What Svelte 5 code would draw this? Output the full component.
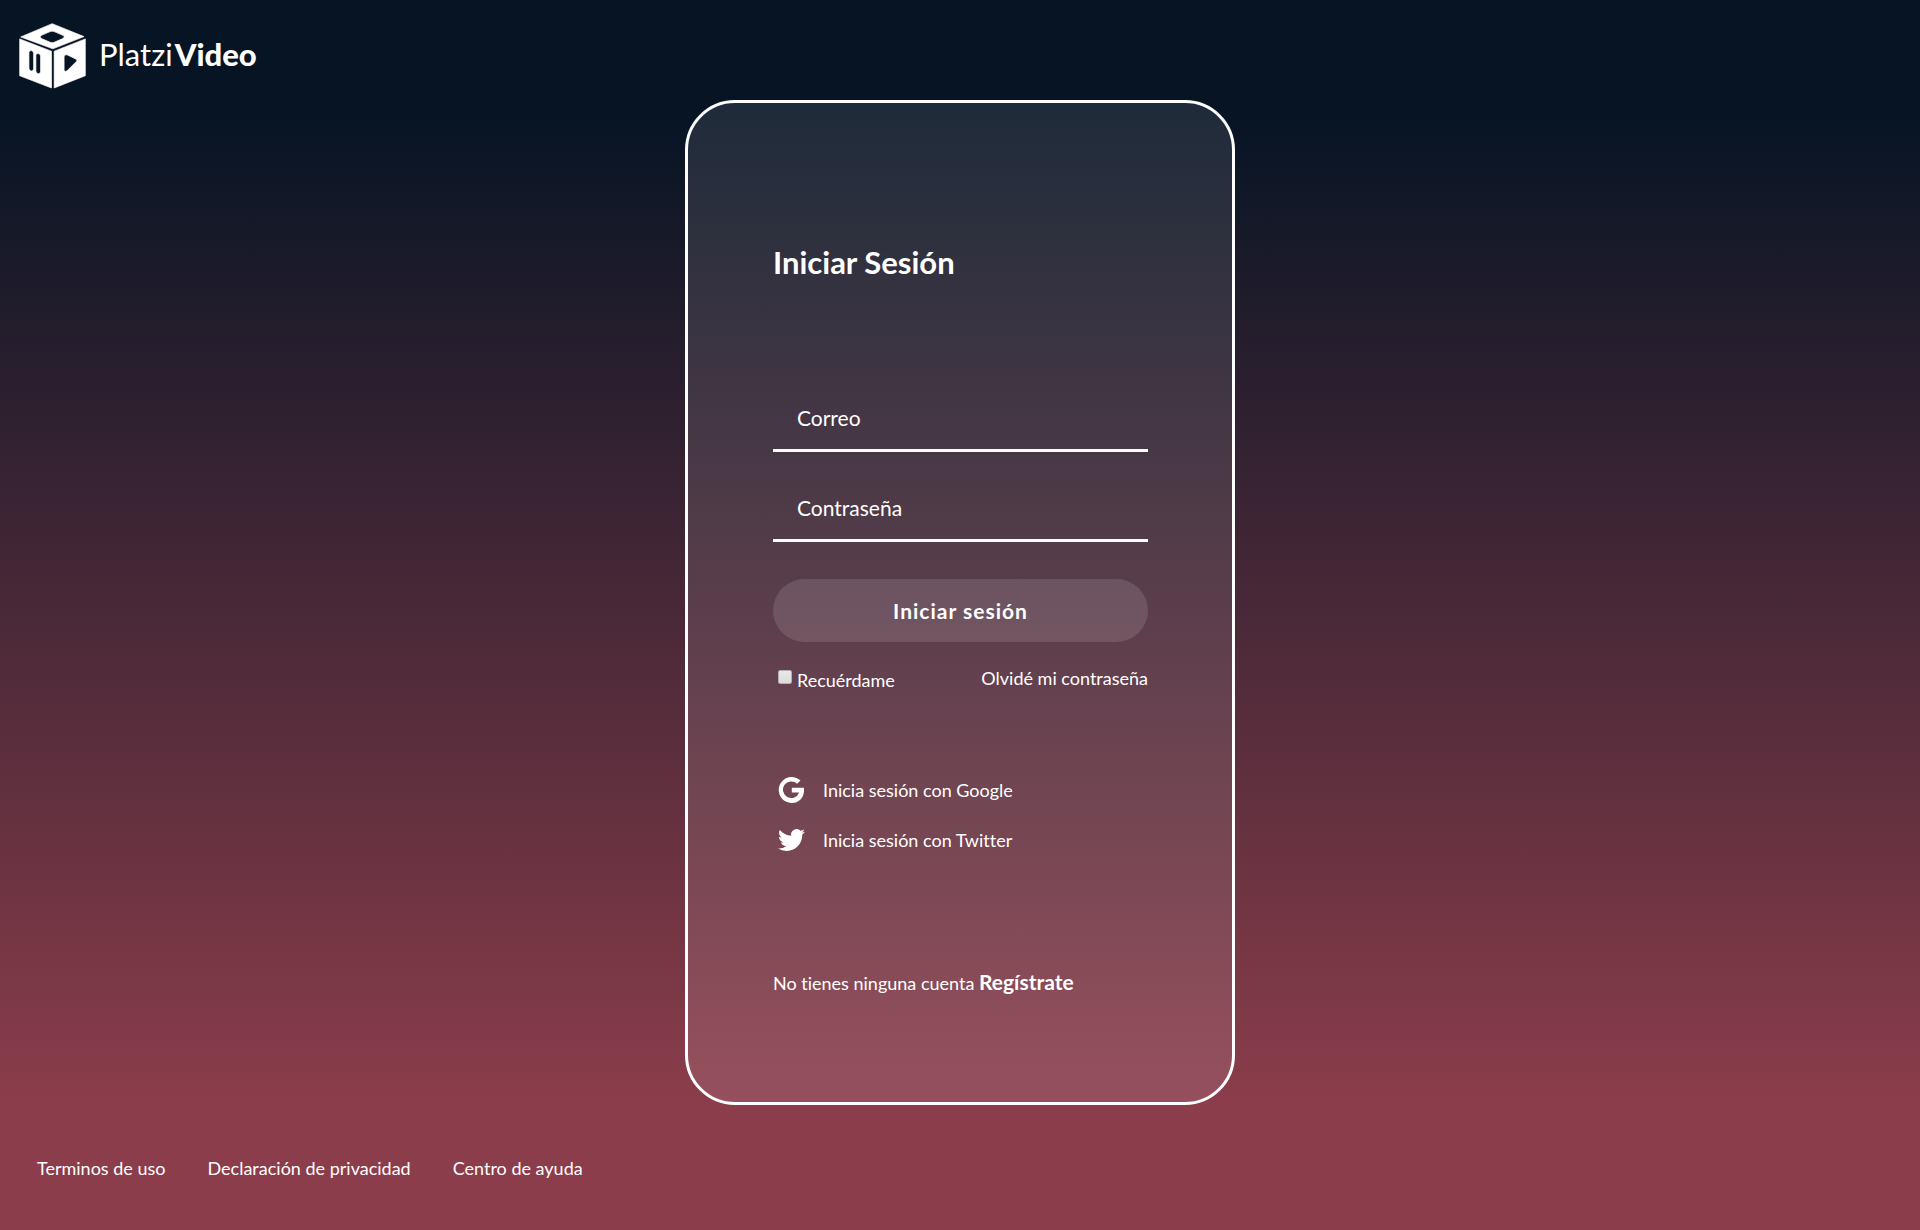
<script>
  let email = $state('');
  let password = $state('');
  let remember = $state(false);

  const footerLinks = ['Terminos de uso', 'Declaración de privacidad', 'Centro de ayuda'];
</script>

<div class="page">
  <header class="header">
    <a class="logo" href="#home" aria-label="PlatziVideo">
      <svg class="cube" viewBox="57 69 202 199" aria-hidden="true">
        <g fill="#fff" stroke="#fff" stroke-width="2" stroke-linejoin="round">
          <path fill-rule="evenodd" d="M157 71 L253 110 L159 147 L62 111 Z M151 95 L125 106 Q117 111 125 116 L151 127 Q157 130 163 127 L189 116 Q198 111 189 106 L163 95 Q157 92 151 95 Z" />
          <path fill-rule="evenodd" d="M59 117 L155 154 L155 265 L59 228 Z M87 158 V205 Q87 213 94 214 Q101 214 101 207 V160 Q100 153 94 152 Q87 152 87 158 Z M108 167 V213 Q108 221 115 222 Q122 222 122 215 V169 Q122 162 115 161 Q108 160 108 167 Z" />
          <path fill-rule="evenodd" d="M163 154 L257 117 L257 228 L163 265 Z M193 171 V209 Q194 218 202 213 L230 185 Q234 180 229 178 L202 165 Q193 163 193 171 Z" />
        </g>
      </svg>
      <span class="brand">Platzi<b>Video</b></span>
    </a>
  </header>

  <main class="main">
    <section class="card">
      <h2 class="title">Iniciar Sesión</h2>

      <form class="form" onsubmit={(event) => event.preventDefault()}>
        <input class="field" type="email" aria-label="Correo" placeholder="Correo" bind:value={email} />
        <input class="field" type="password" aria-label="Contraseña" placeholder="Contraseña" bind:value={password} />
        <button class="submit" type="submit">Iniciar sesión</button>
        <div class="options">
          <label class="remember">
            <input class="check" type="checkbox" bind:checked={remember} />
            <span>Recuérdame</span>
          </label>
          <a href="#forgot">Olvidé mi contraseña</a>
        </div>
      </form>

      <div class="social">
        <a class="provider" href="#google">
          <svg viewBox="0 0 26 26" aria-hidden="true">
            <path fill="#fff" d="M13.3 10.7 H25.3 Q25.7 12.4 25.5 14.2 C25 21 20.3 26 13.3 26 A13 13 0 1 1 22 3.4 L18.6 6.8 A8.3 8.3 0 1 0 20.6 15.4 H13.3 Z" />
          </svg>
          <span>Inicia sesión con Google</span>
        </a>
        <a class="provider" href="#twitter">
          <svg viewBox="0 2 24 20" aria-hidden="true">
            <path fill="#fff" d="M23.954 4.569a10 10 0 0 1-2.825.775 4.958 4.958 0 0 0 2.163-2.723 9.9 9.9 0 0 1-3.127 1.184 4.92 4.92 0 0 0-8.384 4.482C7.691 8.094 4.066 6.13 1.64 3.161a4.822 4.822 0 0 0-.666 2.475c0 1.71.87 3.213 2.188 4.096a4.904 4.904 0 0 1-2.228-.616v.061a4.923 4.923 0 0 0 3.946 4.827 4.996 4.996 0 0 1-2.212.085 4.937 4.937 0 0 0 4.604 3.417 9.868 9.868 0 0 1-6.102 2.105c-.39 0-.779-.023-1.17-.067a13.995 13.995 0 0 0 7.557 2.209c9.054 0 13.999-7.496 13.999-13.986 0-.209 0-.42-.015-.63a9.936 9.936 0 0 0 2.413-2.568z" />
          </svg>
          <span>Inicia sesión con Twitter</span>
        </a>
      </div>

      <p class="register">No tienes ninguna cuenta <a href="#register">Regístrate</a></p>
    </section>
  </main>

  <footer class="footer">
    {#each footerLinks as text}
      <a href="#info">{text}</a>
    {/each}
  </footer>
</div>

<style>
  :global(body) {
    margin: 0;
  }

  .page {
    box-sizing: border-box;
    display: flex;
    flex-direction: column;
    min-height: 100vh;
    color: #fff;
    font-family: Lato, "Open Sans", sans-serif;
    font-size: 18px;
    font-variant-ligatures: none;
    line-height: 24px;
    background: linear-gradient(#061424 9%, #8c3d4b 90%);
  }

  a {
    color: inherit;
    text-decoration: none;
  }

  .header {
    box-sizing: border-box;
    display: flex;
    align-items: center;
    height: 100px;
    padding: 12px 19px 0;
  }

  .logo {
    display: flex;
    align-items: center;
    gap: 13px;
  }

  .cube {
    display: block;
    width: 67px;
    height: 66px;
  }

  .brand {
    padding-bottom: 4px;
    font-size: 31px;
    font-weight: 400;
    line-height: 36px;
  }

  .brand b {
    margin-left: 2px;
    font-weight: 900;
  }

  .main {
    display: flex;
    flex: 1;
    justify-content: center;
  }

  .card {
    box-sizing: border-box;
    width: 550px;
    max-width: 100%;
    padding: 139px 84px 100px 85px;
    border: 3px solid #fff;
    border-radius: 50px;
    background: rgba(255, 255, 255, 0.1);
  }

  .title {
    margin: 0 0 105px;
    font-size: 31px;
    font-weight: 700;
    line-height: 40px;
  }

  .form {
    display: flex;
    flex-direction: column;
  }

  .field {
    box-sizing: border-box;
    width: 100%;
    height: 65px;
    margin: 0 0 25px;
    padding: 0 24px 2px;
    border: 0;
    border-bottom: 3px solid #fff;
    outline: none;
    background: transparent;
    color: #fff;
    font: inherit;
    font-size: 21px;
  }

  .field::placeholder {
    color: #fff;
    opacity: 1;
  }

  .submit {
    height: 63px;
    margin: 12px 0 24px;
    padding: 0;
    border: 0;
    border-radius: 32px;
    background: rgba(255, 255, 255, 0.12);
    color: #fff;
    font: inherit;
    font-size: 21px;
    font-weight: 700;
    letter-spacing: 1px;
    cursor: pointer;
  }

  .options {
    display: flex;
    justify-content: space-between;
  }

  .remember {
    display: flex;
    align-items: center;
    gap: 5px;
    padding-top: 2px;
  }

  .check {
    appearance: none;
    width: 14px;
    height: 14px;
    margin: 0 0 6px 5px;
    border: 1px solid #b0b0b0;
    border-radius: 2px;
    background: linear-gradient(#e8e8e8, #dcdcdc);
  }

  .check:checked {
    background: #2b6fd6;
  }

  .social {
    display: flex;
    flex-direction: column;
    gap: 24px;
    margin: 85px 0 117px;
  }

  .provider {
    display: flex;
    align-items: center;
    gap: 18px;
    height: 26px;
    padding-left: 5px;
  }

  .provider svg {
    width: 27px;
    height: 26px;
  }

  .register {
    margin: 0;
  }

  .register a {
    font-size: 21px;
    font-weight: 700;
  }

  .footer {
    display: flex;
    align-items: center;
    flex-wrap: wrap;
    gap: 42px;
    box-sizing: border-box;
    min-height: 125px;
    padding: 0 37px;
  }
</style>
